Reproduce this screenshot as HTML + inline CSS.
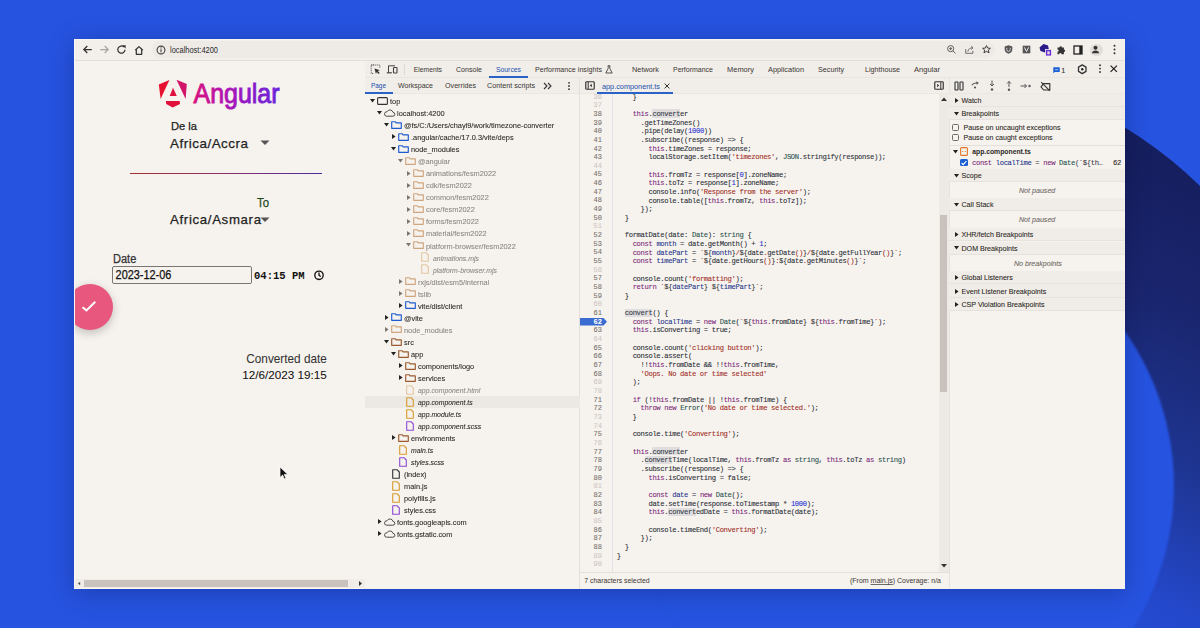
<!DOCTYPE html>
<html><head><meta charset="utf-8">
<style>
*{margin:0;padding:0;box-sizing:border-box}
html,body{width:1200px;height:628px;overflow:hidden}
body{position:relative;background:#2653e0;font-family:"Liberation Sans", sans-serif;}
.a{position:absolute}
.t{position:absolute;white-space:pre;line-height:1;-webkit-text-stroke:0.08px currentColor}
.m{font-family:"Liberation Mono", monospace}
svg{position:absolute;overflow:visible}
</style></head><body>

<div class="a" style="left:486px;top:65.6px;width:840px;height:840px;border-radius:50%;background:linear-gradient(205deg,#141c58 0%,#161f60 15%,#1a2670 26%,#1e3592 38%,#2448cc 50%,#2653e0 60%)"></div>
<div class="a" style="left:638px;top:217.6px;width:536px;height:536px;border-radius:50%;background:#2653e0;filter:blur(1.2px)"></div>

<div class="a" style="left:74px;top:39px;width:1051px;height:550px;background:#f6f2ed;box-shadow:0 4px 24px rgba(0,0,40,0.25)"></div>
<div class="a" style="left:0;top:0;width:1200px;height:628px;clip-path:inset(39px 75px 39px 74px)">
<div class="a" style="left:74px;top:39px;width:1051px;height:22px;background:#f3efeb;border-bottom:1px solid #e2ded9"></div>
<div class="a" style="left:152px;top:41px;width:843px;height:17px;border-radius:9px;background:#eeeae6"></div>
<svg style="left:81.5px;top:44px" width="11" height="11" viewBox="0 0 11 11"><path d="M9.8 5.5H1.8M5.3 2L1.8 5.5 5.3 9" fill="none" stroke="#333" stroke-width="1.25"/></svg>
<svg style="left:98.5px;top:44px" width="11" height="11" viewBox="0 0 11 11"><path d="M1.2 5.5H9.2M5.7 2L9.2 5.5 5.7 9" fill="none" stroke="#a9a5a0" stroke-width="1.25"/></svg>
<svg style="left:116px;top:44px" width="11" height="11" viewBox="0 0 11 11"><path d="M9 5.7A3.6 3.6 0 1 1 7.9 3" fill="none" stroke="#333" stroke-width="1.25"/><path d="M6.3 1.3h3.3v3.3z" fill="#333"/></svg>
<svg style="left:133px;top:43.5px" width="12" height="12" viewBox="0 0 12 12"><path d="M2.2 6.2L6 2.6l3.8 3.6M3.3 5.3v5h5.4v-5" fill="none" stroke="#333" stroke-width="1.25" stroke-linejoin="round"/></svg>
<svg style="left:156px;top:44.5px" width="10" height="10" viewBox="0 0 10 10"><circle cx="5" cy="5" r="3.9" fill="none" stroke="#444" stroke-width="1.1"/><path d="M5 4.3v3" stroke="#444" stroke-width="1.1"/><circle cx="5" cy="2.9" r="0.6" fill="#444"/></svg>

<svg style="left:0;top:0" width="1" height="1"><text x="170" y="52.6" font-family="Liberation Sans" font-size="8.6" fill="#2a2a2a" textLength="48" lengthAdjust="spacingAndGlyphs">localhost:4200</text></svg>
<svg style="left:946px;top:44px" width="11" height="11" viewBox="0 0 13 13"><circle cx="5.5" cy="5.5" r="3.6" fill="none" stroke="#555" stroke-width="1.1"/><path d="M8.2 8.2l3 3M3.8 5.5h3.4M5.5 3.8v3.4" stroke="#555" stroke-width="1.1"/></svg>
<svg style="left:964px;top:44px" width="11" height="11" viewBox="0 0 13 13"><path d="M2 6v5h8.5V8" fill="none" stroke="#666" stroke-width="1.1"/><path d="M4.5 9c0.5-3 2.5-4.5 6-4.5M8.5 2.5l2.2 2-2.2 2" fill="none" stroke="#666" stroke-width="1.1"/></svg>
<svg style="left:981px;top:44px" width="11" height="11" viewBox="0 0 13 13"><path d="M6.5 1.8l1.4 3 3.2.3-2.4 2.1.8 3.2-3-1.7-3 1.7.8-3.2-2.4-2.1 3.2-.3z" fill="none" stroke="#333" stroke-width="1.1" stroke-linejoin="round"/></svg>
<svg style="left:1003px;top:44px" width="11" height="11" viewBox="0 0 13 13"><path d="M6.5 1.5l4.5 1.5v3.5c0 2.5-2 4.2-4.5 5-2.5-.8-4.5-2.5-4.5-5V3z" fill="#555"/><path d="M4.5 4.5v2.2a2 2 0 0 0 4 0V4.5" fill="none" stroke="#eee" stroke-width="0.9"/></svg>
<svg style="left:1021px;top:44px" width="11" height="11" viewBox="0 0 13 13"><rect x="2" y="2" width="9" height="9" fill="#555"/><path d="M4 4l2.5 5 2.5-5" fill="none" stroke="#eee" stroke-width="1.1"/></svg>
<svg style="left:1038px;top:42px" width="15" height="15" viewBox="0 0 15 15"><path d="M1.5 5.5l4-3.5 4.5 1.5 1 4.5-4 2.5-4.5-1.5z" fill="#2a1a8a"/><rect x="7.5" y="7.5" width="6" height="6.5" fill="#6b2bd8" stroke="#f2eeea" stroke-width="0.8"/><rect x="9.3" y="9.3" width="2.4" height="3" fill="#ddd"/></svg>
<svg style="left:1055px;top:43px" width="13" height="13" viewBox="0 0 13 13"><path d="M2.5 4.5h2a1.2 1.2 0 1 1 2.4 0h2v2a1.2 1.2 0 1 1 0 2.4v2.3H6.6a1.2 1.2 0 1 0-2.4 0H2.5V8.8a1.2 1.2 0 1 0 0-2.4z" fill="#333"/></svg>
<svg style="left:1073px;top:45px" width="10" height="10" viewBox="0 0 10 10"><rect x="1" y="1" width="8" height="8" fill="none" stroke="#222" stroke-width="1.3"/><rect x="6.3" y="1" width="2.7" height="8" fill="#222"/></svg>
<div class="a" style="left:1090px;top:43.5px;width:12.5px;height:12.5px;border-radius:50%;background:#e1ddd8"></div>
<svg style="left:1089px;top:43px" width="13" height="13" viewBox="0 0 13 13"><circle cx="6.5" cy="4.8" r="2" fill="#333"/><path d="M2.8 10.2c0.5-2 2-2.8 3.7-2.8s3.2.8 3.7 2.8z" fill="#333"/></svg>
<svg style="left:1108px;top:43px" width="13" height="13" viewBox="0 0 13 13"><circle cx="6.5" cy="2.8" r="1" fill="#333"/><circle cx="6.5" cy="6.5" r="1" fill="#333"/><circle cx="6.5" cy="10.2" r="1" fill="#333"/></svg>

<svg style="left:155px;top:75px" width="40" height="37" viewBox="0 0 40 37">
<path d="M3.8 9.4L14.4 5 5.6 23.9z" fill="#e5112f"/>
<path d="M21.5 4.7L31.8 9.1 30.6 23.9z" fill="#d2146a"/>
<path d="M18 12.7L14.7 20.9H21.8z" fill="#e0103f"/>
<path d="M10.9 25.9H24.7L25 28.9 17.7 32.4 11.2 28.9z" fill="#e0103a"/>
</svg>
<svg style="left:0;top:0" width="1200" height="628" viewBox="0 0 1200 628">
<defs><linearGradient id="ag" gradientUnits="userSpaceOnUse" x1="193" y1="0" x2="280" y2="0"><stop offset="0" stop-color="#d8107c"/><stop offset="0.35" stop-color="#b414b2"/><stop offset="0.6" stop-color="#9018c6"/><stop offset="1" stop-color="#6a22dc"/></linearGradient></defs>
<text x="193.5" y="102.7" font-family="Liberation Sans" font-size="27.5" textLength="86" lengthAdjust="spacingAndGlyphs" fill="url(#ag)" stroke="url(#ag)" stroke-width="0.9">Angular</text>
</svg>
<svg style="left:0;top:0" width="1" height="1"><text x="171" y="130.2" font-family="Liberation Sans" font-size="11.2" fill="#222" stroke="#222" stroke-width="0.25" textLength="26.00" lengthAdjust="spacingAndGlyphs" >De la</text></svg>
<svg style="left:0;top:0" width="1" height="1"><text x="170" y="148" font-family="Liberation Sans" font-size="13.4" fill="#222" stroke="#222" stroke-width="0.25" textLength="78.00" lengthAdjust="spacing" >Africa/Accra</text></svg>
<svg style="left:260px;top:140px" width="10" height="6" viewBox="0 0 10 6"><path d="M0.5 0.5h9L5 5z" fill="#555"/></svg>
<div class="a" style="left:130px;top:173px;width:192px;height:1.3px;background:linear-gradient(90deg,#a33030,#8a2f6a 50%,#4a2ca0)"></div>
<svg style="left:0;top:0" width="1" height="1"><text x="257" y="207" font-family="Liberation Sans" font-size="12.4" fill="#1d4a1d" stroke="#1d4a1d" stroke-width="0.25" textLength="12.00" lengthAdjust="spacingAndGlyphs" >To</text></svg>
<svg style="left:0;top:0" width="1" height="1"><text x="170" y="224.4" font-family="Liberation Sans" font-size="13.2" fill="#222" stroke="#222" stroke-width="0.25" textLength="91.00" lengthAdjust="spacing" >Africa/Asmara</text></svg>
<svg style="left:260px;top:217px" width="10" height="6" viewBox="0 0 10 6"><path d="M0.5 0.5h9L5 5z" fill="#555"/></svg>
<svg style="left:0;top:0" width="1" height="1"><text x="113" y="262.65" font-family="Liberation Sans" font-size="12" fill="#333" stroke="#333" stroke-width="0.25" textLength="23.30" lengthAdjust="spacingAndGlyphs" >Date</text></svg>
<div class="a" style="left:112px;top:266px;width:140px;height:17.5px;border:1px solid #7a7572;border-radius:2px"></div>
<svg style="left:0;top:0" width="1" height="1"><text x="115.6" y="278.9" font-family="Liberation Sans" font-size="12" fill="#111" stroke="#111" stroke-width="0.25" textLength="55.80" lengthAdjust="spacingAndGlyphs" >2023-12-06</text></svg>
<svg style="left:0;top:0" width="1" height="1"><text x="254" y="278.8" font-family="Liberation Mono" font-weight="bold" font-size="10.9" fill="#111" textLength="50.7" lengthAdjust="spacingAndGlyphs">04:15 PM</text></svg>
<svg style="left:313px;top:269px" width="12" height="12" viewBox="0 0 12 12"><circle cx="6" cy="6.3" r="4.2" fill="none" stroke="#111" stroke-width="1.35"/><path d="M6 3.6v2.8l1.8 1.1" fill="none" stroke="#111" stroke-width="1.3"/></svg>
<div class="a" style="left:66.5px;top:283.5px;width:46px;height:46px;border-radius:50%;background:#e8577d;box-shadow:0 3px 10px rgba(0,0,0,0.22)"></div>
<svg style="left:81px;top:299px" width="16" height="14" viewBox="0 0 16 14"><path d="M1.5 8.2l4 3.2 8.8-8.6" fill="none" stroke="#fff" stroke-width="2"/></svg>
<svg style="left:0;top:0" width="1" height="1"><text x="246.3" y="362.75" font-family="Liberation Sans" font-size="12.2" fill="#333" stroke="#333" stroke-width="0.05" textLength="80.50" lengthAdjust="spacingAndGlyphs" >Converted date</text></svg>
<svg style="left:0;top:0" width="1" height="1"><text x="242.3" y="379" font-family="Liberation Sans" font-size="11.8" fill="#111" stroke="#111" stroke-width="0.05" textLength="84.50" lengthAdjust="spacingAndGlyphs" >12/6/2023 19:15</text></svg>
<svg style="left:279px;top:465.5px" width="10" height="14" viewBox="0 0 10 14"><path d="M1 1v10.5l2.6-2.4 1.8 4 1.6-.8-1.8-3.9H8.8z" fill="#111" stroke="#fff" stroke-width="0.7"/></svg>
<div class="a" style="left:74px;top:579px;width:291px;height:9px;background:#f0ece8"></div>
<div class="a" style="left:84px;top:580px;width:264px;height:7px;background:#c9c2bd"></div>
<svg style="left:77.3px;top:581.2px" width="4" height="5" viewBox="0 0 4 5"><path d="M3.2 0.8L0.8 2.5 3.2 4.2z" fill="#555"/></svg>
<svg style="left:357px;top:580px" width="7" height="7" viewBox="0 0 7 7"><path d="M2 1l3 2.5L2 6z" fill="#333"/></svg>
<div class="a" style="left:364.6px;top:61px;width:1.6px;height:528px;background:#e7e3ec"></div>
<div class="a" style="left:365px;top:61px;width:760px;height:527px;background:#f6f2ee"></div>
<div class="a" style="left:365px;top:61px;width:760px;height:17px;background:#f1ede9;border-bottom:1px solid #e9e5e1"></div>
<svg style="left:370px;top:64px" width="11" height="11" viewBox="0 0 11 11"><path d="M4 1H1.2v8.5H4" fill="none" stroke="#555" stroke-width="0.9" stroke-dasharray="1.2 0.8"/><path d="M1.2 1h8.6v3" fill="none" stroke="#555" stroke-width="0.9" stroke-dasharray="1.2 0.8"/><path d="M4.5 4.5l5.5 1.8-2.3.7 2 2-1 1-2-2-.7 2.3z" fill="#333"/></svg>
<svg style="left:386px;top:64px" width="12" height="11" viewBox="0 0 12 11"><path d="M2.5 8.5V1.8h6.5" fill="none" stroke="#444" stroke-width="1"/><path d="M0.8 8.8h5" stroke="#444" stroke-width="1.2"/><rect x="7.5" y="3.5" width="3.5" height="5.5" rx="0.6" fill="none" stroke="#444" stroke-width="1.1"/></svg>
<div class="a" style="left:403.5px;top:64px;width:1px;height:11px;background:#ddd8d3"></div>
<svg style="left:0;top:0" width="1" height="1"><text x="413.7" y="72.09" font-family="Liberation Sans" font-size="7.2" fill="#3a3632" textLength="28.30000000000001" lengthAdjust="spacingAndGlyphs" >Elements</text></svg>
<svg style="left:0;top:0" width="1" height="1"><text x="456" y="72.09" font-family="Liberation Sans" font-size="7.2" fill="#3a3632" textLength="26" lengthAdjust="spacingAndGlyphs" >Console</text></svg>
<svg style="left:0;top:0" width="1" height="1"><text x="496" y="72.09" font-family="Liberation Sans" font-size="7.2" fill="#1a4fb0" textLength="25" lengthAdjust="spacingAndGlyphs" >Sources</text></svg>
<svg style="left:0;top:0" width="1" height="1"><text x="535" y="72.09" font-family="Liberation Sans" font-size="7.2" fill="#3a3632" textLength="67" lengthAdjust="spacingAndGlyphs" >Performance insights</text></svg>
<svg style="left:0;top:0" width="1" height="1"><text x="632" y="72.09" font-family="Liberation Sans" font-size="7.2" fill="#3a3632" textLength="27" lengthAdjust="spacingAndGlyphs" >Network</text></svg>
<svg style="left:0;top:0" width="1" height="1"><text x="673" y="72.09" font-family="Liberation Sans" font-size="7.2" fill="#3a3632" textLength="40" lengthAdjust="spacingAndGlyphs" >Performance</text></svg>
<svg style="left:0;top:0" width="1" height="1"><text x="727" y="72.09" font-family="Liberation Sans" font-size="7.2" fill="#3a3632" textLength="27" lengthAdjust="spacingAndGlyphs" >Memory</text></svg>
<svg style="left:0;top:0" width="1" height="1"><text x="768" y="72.09" font-family="Liberation Sans" font-size="7.2" fill="#3a3632" textLength="36" lengthAdjust="spacingAndGlyphs" >Application</text></svg>
<svg style="left:0;top:0" width="1" height="1"><text x="818" y="72.09" font-family="Liberation Sans" font-size="7.2" fill="#3a3632" textLength="26" lengthAdjust="spacingAndGlyphs" >Security</text></svg>
<svg style="left:0;top:0" width="1" height="1"><text x="865" y="72.09" font-family="Liberation Sans" font-size="7.2" fill="#3a3632" textLength="35" lengthAdjust="spacingAndGlyphs" >Lighthouse</text></svg>
<svg style="left:0;top:0" width="1" height="1"><text x="914" y="72.09" font-family="Liberation Sans" font-size="7.2" fill="#3a3632" textLength="26" lengthAdjust="spacingAndGlyphs" >Angular</text></svg>
<div class="a" style="left:489px;top:76px;width:39px;height:1.6px;background:#2b62c8"></div>
<svg style="left:605px;top:65px" width="8" height="9" viewBox="0 0 8 9"><path d="M2.8 0.8h2.4M3.2 0.8v2.6L0.8 8h6.4L4.8 3.4V0.8" fill="none" stroke="#444" stroke-width="0.9"/></svg>
<svg style="left:1052.5px;top:67px" width="7" height="7" viewBox="0 0 7 7"><path d="M0.3 0.3h6.4v4.6H1.8L0.3 6.3z" fill="#1a5fd6"/><path d="M2 2.8h3" stroke="#cfe0ff" stroke-width="0.8"/></svg>
<div class="t" style="left:1061.3px;top:67.2px;font-size:7.4px;color:#333">1</div>
<svg style="left:1077px;top:63.5px" width="10.5" height="10.5" viewBox="0 0 10.5 10.5"><path d="M5.25 0.9L9 3.1v4.3L5.25 9.6 1.5 7.4V3.1z" fill="none" stroke="#333" stroke-width="1.3" stroke-linejoin="round"/><circle cx="5.25" cy="5.25" r="1.2" fill="#222"/></svg>
<svg style="left:1096.5px;top:64px" width="6" height="9" viewBox="0 0 6 9"><circle cx="3" cy="1.2" r="0.95" fill="#333"/><circle cx="3" cy="4.6" r="0.95" fill="#333"/><circle cx="3" cy="8" r="0.95" fill="#333"/></svg>
<svg style="left:1110px;top:65px" width="7.5" height="7.5" viewBox="0 0 7.5 7.5"><path d="M0.6 0.6l6.3 6.3M6.9 0.6L0.6 6.9" stroke="#222" stroke-width="1.2"/></svg>
<div class="a" style="left:365px;top:78px;width:760px;height:16px;background:#f1ede9;border-bottom:1px solid #ebe7e3"></div>
<svg style="left:0;top:0" width="1" height="1"><text x="371" y="88.19" font-family="Liberation Sans" font-size="7.2" fill="#1a4fb0" textLength="15" lengthAdjust="spacingAndGlyphs" >Page</text></svg>
<svg style="left:0;top:0" width="1" height="1"><text x="398" y="88.19" font-family="Liberation Sans" font-size="7.2" fill="#3a3632" textLength="35" lengthAdjust="spacingAndGlyphs" >Workspace</text></svg>
<svg style="left:0;top:0" width="1" height="1"><text x="445" y="88.19" font-family="Liberation Sans" font-size="7.2" fill="#3a3632" textLength="31" lengthAdjust="spacingAndGlyphs" >Overrides</text></svg>
<svg style="left:0;top:0" width="1" height="1"><text x="487" y="88.19" font-family="Liberation Sans" font-size="7.2" fill="#3a3632" textLength="48" lengthAdjust="spacingAndGlyphs" >Content scripts</text></svg>
<div class="a" style="left:365px;top:92.3px;width:28px;height:1.6px;background:#2b62c8"></div>
<svg style="left:543px;top:82px" width="9" height="8" viewBox="0 0 9 8"><path d="M1 1l3 3-3 3M5 1l3 3-3 3" fill="none" stroke="#333" stroke-width="1.1"/></svg>
<svg style="left:566px;top:81px" width="6" height="10" viewBox="0 0 6 10"><circle cx="3" cy="1.8" r="0.9" fill="#333"/><circle cx="3" cy="5" r="0.9" fill="#333"/><circle cx="3" cy="8.2" r="0.9" fill="#333"/></svg>
<div class="a" style="left:579.2px;top:78px;width:1px;height:511px;background:#e3dfe3"></div>
<svg style="left:585px;top:81px" width="10" height="9" viewBox="0 0 11 10"><rect x="0.8" y="0.8" width="9.4" height="8.4" rx="1" fill="none" stroke="#333" stroke-width="1.3"/><path d="M3.5 1v8" stroke="#333" stroke-width="1.1"/><path d="M7.5 3v4L5.3 5z" fill="#333"/></svg>
<svg style="left:0;top:0" width="1" height="1"><text x="602" y="89.09" font-family="Liberation Sans" font-size="7.2" fill="#1a4fb0" textLength="58" lengthAdjust="spacingAndGlyphs" >app.component.ts</text></svg>
<svg style="left:664px;top:83px" width="6" height="6" viewBox="0 0 6 6"><path d="M0.6 0.6l4.8 4.8M5.4 0.6L0.6 5.4" stroke="#333" stroke-width="1"/></svg>
<div class="a" style="left:597px;top:92.3px;width:76px;height:1.6px;background:#2b62c8"></div>
<svg style="left:934px;top:81px" width="10" height="9" viewBox="0 0 11 10"><rect x="0.8" y="0.8" width="9.4" height="8.4" rx="1" fill="none" stroke="#333" stroke-width="1.3"/><path d="M7.5 1v8" stroke="#333" stroke-width="1.1"/><path d="M3.5 3v4L5.7 5z" fill="#333"/></svg>
<div class="a" style="left:948.5px;top:78px;width:1px;height:510px;background:#e6e2dd"></div>
<svg style="left:954px;top:81px" width="10" height="10" viewBox="0 0 10 10"><rect x="1" y="1" width="3" height="8" rx="0.6" fill="none" stroke="#333" stroke-width="1.1"/><rect x="6" y="1" width="3" height="8" rx="0.6" fill="none" stroke="#333" stroke-width="1.1"/></svg>
<svg style="left:970px;top:80px" width="11" height="10" viewBox="0 0 11 10"><path d="M1.8 5.2c1-1.8 2.6-2.5 5.2-2.2" fill="none" stroke="#555" stroke-width="1.1"/><path d="M6.3 1.2l2.6 1.7-2.3 1.8z" fill="#555"/><circle cx="5" cy="7.5" r="1.1" fill="#555"/></svg>
<svg style="left:988px;top:80px" width="8" height="12" viewBox="0 0 8 12"><path d="M4 0.5v5" stroke="#555" stroke-width="1"/><path d="M2 4l2 2 2-2" fill="none" stroke="#555" stroke-width="1"/><circle cx="4" cy="9.5" r="1.2" fill="#555"/></svg>
<svg style="left:1005px;top:80px" width="8" height="12" viewBox="0 0 8 12"><path d="M4 1.5v5.5" stroke="#555" stroke-width="1"/><path d="M2 3.5l2-2 2 2" fill="none" stroke="#555" stroke-width="1"/><circle cx="4" cy="9.8" r="1.2" fill="#555"/></svg>
<svg style="left:1020px;top:81px" width="12" height="10" viewBox="0 0 12 10"><path d="M0.5 5h6" stroke="#555" stroke-width="1"/><path d="M4.5 3l2 2-2 2" fill="none" stroke="#555" stroke-width="1"/><circle cx="9.5" cy="5" r="1.2" fill="#555"/></svg>
<svg style="left:1040px;top:80.5px" width="11" height="11" viewBox="0 0 11 11"><path d="M1 5.8L3.6 2.6H9.8V9H3.6z" fill="none" stroke="#333" stroke-width="1.15" stroke-linejoin="round"/><path d="M1.2 1.2l8.6 8.6" stroke="#333" stroke-width="1.15"/></svg>
<div class="a" style="left:365px;top:395.65px;width:214.5px;height:12px;background:#ece8e3"></div>
<svg style="left:370.00px;top:98.90px" width="5" height="4" viewBox="0 0 5 4"><path d="M0 0h5L2.5 3.6z" fill="#222"/></svg>
<svg style="left:377.00px;top:96.90px" width="11" height="8" viewBox="0 0 11 8"><rect x="0.6" y="0.6" width="9.8" height="6.8" rx="1" fill="none" stroke="#333" stroke-width="1.1"/></svg>
<div class="t" style="left:390.00px;top:98.15px;font-size:7.7px;transform:scaleX(0.96);transform-origin:0 0;color:#2b2723;">top</div>
<svg style="left:377.10px;top:110.93px" width="5" height="4" viewBox="0 0 5 4"><path d="M0 0h5L2.5 3.6z" fill="#222"/></svg>
<svg style="left:384.10px;top:108.93px" width="11" height="8" viewBox="0 0 11 8"><path d="M2.5 7.2h6.3a1.9 1.9 0 0 0 .2-3.8A3.2 3.2 0 0 0 3 2.8 2.2 2.2 0 0 0 2.5 7.2z" fill="none" stroke="#444" stroke-width="0.95"/></svg>
<div class="t" style="left:397.10px;top:110.18px;font-size:7.7px;transform:scaleX(0.96);transform-origin:0 0;color:#2b2723;">localhost:4200</div>
<svg style="left:384.20px;top:122.96px" width="5" height="4" viewBox="0 0 5 4"><path d="M0 0h5L2.5 3.6z" fill="#222"/></svg>
<svg style="left:391.20px;top:120.96px" width="11" height="8" viewBox="0 0 11 8"><path d="M0.7 0.7h3.4l1 1.2h5.2v5.4H0.7z" fill="none" stroke="#1f5bd0" stroke-width="1.15" stroke-linejoin="round"/></svg>
<div class="t" style="left:404.20px;top:122.21px;font-size:7.7px;transform:scaleX(0.96);transform-origin:0 0;color:#2b2723;">@fs/C:/Users/chayi9/work/timezone-converter</div>
<svg style="left:392.30px;top:134.49px" width="4" height="5" viewBox="0 0 4 5"><path d="M0 0v5l3.6-2.5z" fill="#222"/></svg>
<svg style="left:398.30px;top:132.99px" width="11" height="8" viewBox="0 0 11 8"><path d="M0.7 0.7h3.4l1 1.2h5.2v5.4H0.7z" fill="none" stroke="#1f5bd0" stroke-width="1.15" stroke-linejoin="round"/></svg>
<div class="t" style="left:411.30px;top:134.24px;font-size:7.7px;transform:scaleX(0.96);transform-origin:0 0;color:#2b2723;">.angular/cache/17.0.3/vite/deps</div>
<svg style="left:391.30px;top:147.02px" width="5" height="4" viewBox="0 0 5 4"><path d="M0 0h5L2.5 3.6z" fill="#222"/></svg>
<svg style="left:398.30px;top:145.02px" width="11" height="8" viewBox="0 0 11 8"><path d="M0.7 0.7h3.4l1 1.2h5.2v5.4H0.7z" fill="none" stroke="#1f5bd0" stroke-width="1.15" stroke-linejoin="round"/></svg>
<div class="t" style="left:411.30px;top:146.27px;font-size:7.7px;transform:scaleX(0.96);transform-origin:0 0;color:#2b2723;">node_modules</div>
<svg style="left:398.40px;top:159.05px" width="5" height="4" viewBox="0 0 5 4"><path d="M0 0h5L2.5 3.6z" fill="#7d7670"/></svg>
<svg style="left:405.40px;top:157.05px" width="11" height="8" viewBox="0 0 11 8"><path d="M0.7 0.7h3.4l1 1.2h5.2v5.4H0.7z" fill="none" stroke="#cfa57f" stroke-width="1.15" stroke-linejoin="round"/></svg>
<div class="t" style="left:418.40px;top:158.30px;font-size:7.7px;transform:scaleX(0.96);transform-origin:0 0;color:#8d8782;">@angular</div>
<svg style="left:406.50px;top:170.58px" width="4" height="5" viewBox="0 0 4 5"><path d="M0 0v5l3.6-2.5z" fill="#7d7670"/></svg>
<svg style="left:412.50px;top:169.08px" width="11" height="8" viewBox="0 0 11 8"><path d="M0.7 0.7h3.4l1 1.2h5.2v5.4H0.7z" fill="none" stroke="#cfa57f" stroke-width="1.15" stroke-linejoin="round"/></svg>
<div class="t" style="left:425.50px;top:170.33px;font-size:7.7px;transform:scaleX(0.96);transform-origin:0 0;color:#8d8782;">animations/fesm2022</div>
<svg style="left:406.50px;top:182.61px" width="4" height="5" viewBox="0 0 4 5"><path d="M0 0v5l3.6-2.5z" fill="#7d7670"/></svg>
<svg style="left:412.50px;top:181.11px" width="11" height="8" viewBox="0 0 11 8"><path d="M0.7 0.7h3.4l1 1.2h5.2v5.4H0.7z" fill="none" stroke="#cfa57f" stroke-width="1.15" stroke-linejoin="round"/></svg>
<div class="t" style="left:425.50px;top:182.36px;font-size:7.7px;transform:scaleX(0.96);transform-origin:0 0;color:#8d8782;">cdk/fesm2022</div>
<svg style="left:406.50px;top:194.64px" width="4" height="5" viewBox="0 0 4 5"><path d="M0 0v5l3.6-2.5z" fill="#7d7670"/></svg>
<svg style="left:412.50px;top:193.14px" width="11" height="8" viewBox="0 0 11 8"><path d="M0.7 0.7h3.4l1 1.2h5.2v5.4H0.7z" fill="none" stroke="#cfa57f" stroke-width="1.15" stroke-linejoin="round"/></svg>
<div class="t" style="left:425.50px;top:194.39px;font-size:7.7px;transform:scaleX(0.96);transform-origin:0 0;color:#8d8782;">common/fesm2022</div>
<svg style="left:406.50px;top:206.67px" width="4" height="5" viewBox="0 0 4 5"><path d="M0 0v5l3.6-2.5z" fill="#7d7670"/></svg>
<svg style="left:412.50px;top:205.17px" width="11" height="8" viewBox="0 0 11 8"><path d="M0.7 0.7h3.4l1 1.2h5.2v5.4H0.7z" fill="none" stroke="#cfa57f" stroke-width="1.15" stroke-linejoin="round"/></svg>
<div class="t" style="left:425.50px;top:206.42px;font-size:7.7px;transform:scaleX(0.96);transform-origin:0 0;color:#8d8782;">core/fesm2022</div>
<svg style="left:406.50px;top:218.70px" width="4" height="5" viewBox="0 0 4 5"><path d="M0 0v5l3.6-2.5z" fill="#7d7670"/></svg>
<svg style="left:412.50px;top:217.20px" width="11" height="8" viewBox="0 0 11 8"><path d="M0.7 0.7h3.4l1 1.2h5.2v5.4H0.7z" fill="none" stroke="#cfa57f" stroke-width="1.15" stroke-linejoin="round"/></svg>
<div class="t" style="left:425.50px;top:218.45px;font-size:7.7px;transform:scaleX(0.96);transform-origin:0 0;color:#8d8782;">forms/fesm2022</div>
<svg style="left:406.50px;top:230.73px" width="4" height="5" viewBox="0 0 4 5"><path d="M0 0v5l3.6-2.5z" fill="#7d7670"/></svg>
<svg style="left:412.50px;top:229.23px" width="11" height="8" viewBox="0 0 11 8"><path d="M0.7 0.7h3.4l1 1.2h5.2v5.4H0.7z" fill="none" stroke="#cfa57f" stroke-width="1.15" stroke-linejoin="round"/></svg>
<div class="t" style="left:425.50px;top:230.48px;font-size:7.7px;transform:scaleX(0.96);transform-origin:0 0;color:#8d8782;">material/fesm2022</div>
<svg style="left:405.50px;top:243.26px" width="5" height="4" viewBox="0 0 5 4"><path d="M0 0h5L2.5 3.6z" fill="#7d7670"/></svg>
<svg style="left:412.50px;top:241.26px" width="11" height="8" viewBox="0 0 11 8"><path d="M0.7 0.7h3.4l1 1.2h5.2v5.4H0.7z" fill="none" stroke="#cfa57f" stroke-width="1.15" stroke-linejoin="round"/></svg>
<div class="t" style="left:425.50px;top:242.51px;font-size:7.7px;transform:scaleX(0.96);transform-origin:0 0;color:#8d8782;">platform-browser/fesm2022</div>
<svg style="left:420.60px;top:252.29px" width="8" height="10" viewBox="0 0 8 10"><path d="M0.7 0.7h4.3l2.3 2.3v6.3H0.7z" fill="none" stroke="#e2c79f" stroke-width="1.1" stroke-linejoin="round"/></svg>
<div class="t" style="left:432.60px;top:254.54px;font-size:7.7px;transform:scaleX(0.895);transform-origin:0 0;color:#8d8782;font-style:italic;">animations.mjs</div>
<svg style="left:420.60px;top:264.32px" width="8" height="10" viewBox="0 0 8 10"><path d="M0.7 0.7h4.3l2.3 2.3v6.3H0.7z" fill="none" stroke="#e2c79f" stroke-width="1.1" stroke-linejoin="round"/></svg>
<div class="t" style="left:432.60px;top:266.57px;font-size:7.7px;transform:scaleX(0.895);transform-origin:0 0;color:#8d8782;font-style:italic;">platform-browser.mjs</div>
<svg style="left:399.40px;top:278.85px" width="4" height="5" viewBox="0 0 4 5"><path d="M0 0v5l3.6-2.5z" fill="#7d7670"/></svg>
<svg style="left:405.40px;top:277.35px" width="11" height="8" viewBox="0 0 11 8"><path d="M0.7 0.7h3.4l1 1.2h5.2v5.4H0.7z" fill="none" stroke="#cfa57f" stroke-width="1.15" stroke-linejoin="round"/></svg>
<div class="t" style="left:418.40px;top:278.60px;font-size:7.7px;transform:scaleX(0.96);transform-origin:0 0;color:#8d8782;">rxjs/dist/esm5/internal</div>
<svg style="left:399.40px;top:290.88px" width="4" height="5" viewBox="0 0 4 5"><path d="M0 0v5l3.6-2.5z" fill="#7d7670"/></svg>
<svg style="left:405.40px;top:289.38px" width="11" height="8" viewBox="0 0 11 8"><path d="M0.7 0.7h3.4l1 1.2h5.2v5.4H0.7z" fill="none" stroke="#cfa57f" stroke-width="1.15" stroke-linejoin="round"/></svg>
<div class="t" style="left:418.40px;top:290.63px;font-size:7.7px;transform:scaleX(0.96);transform-origin:0 0;color:#8d8782;">tslib</div>
<svg style="left:399.40px;top:302.91px" width="4" height="5" viewBox="0 0 4 5"><path d="M0 0v5l3.6-2.5z" fill="#222"/></svg>
<svg style="left:405.40px;top:301.41px" width="11" height="8" viewBox="0 0 11 8"><path d="M0.7 0.7h3.4l1 1.2h5.2v5.4H0.7z" fill="none" stroke="#1f5bd0" stroke-width="1.15" stroke-linejoin="round"/></svg>
<div class="t" style="left:418.40px;top:302.66px;font-size:7.7px;transform:scaleX(0.96);transform-origin:0 0;color:#2b2723;">vite/dist/client</div>
<svg style="left:385.20px;top:314.94px" width="4" height="5" viewBox="0 0 4 5"><path d="M0 0v5l3.6-2.5z" fill="#222"/></svg>
<svg style="left:391.20px;top:313.44px" width="11" height="8" viewBox="0 0 11 8"><path d="M0.7 0.7h3.4l1 1.2h5.2v5.4H0.7z" fill="none" stroke="#1f5bd0" stroke-width="1.15" stroke-linejoin="round"/></svg>
<div class="t" style="left:404.20px;top:314.69px;font-size:7.7px;transform:scaleX(0.96);transform-origin:0 0;color:#2b2723;">@vite</div>
<svg style="left:385.20px;top:326.97px" width="4" height="5" viewBox="0 0 4 5"><path d="M0 0v5l3.6-2.5z" fill="#7d7670"/></svg>
<svg style="left:391.20px;top:325.47px" width="11" height="8" viewBox="0 0 11 8"><path d="M0.7 0.7h3.4l1 1.2h5.2v5.4H0.7z" fill="none" stroke="#cfa57f" stroke-width="1.15" stroke-linejoin="round"/></svg>
<div class="t" style="left:404.20px;top:326.72px;font-size:7.7px;transform:scaleX(0.96);transform-origin:0 0;color:#8d8782;">node_modules</div>
<svg style="left:384.20px;top:339.50px" width="5" height="4" viewBox="0 0 5 4"><path d="M0 0h5L2.5 3.6z" fill="#222"/></svg>
<svg style="left:391.20px;top:337.50px" width="11" height="8" viewBox="0 0 11 8"><path d="M0.7 0.7h3.4l1 1.2h5.2v5.4H0.7z" fill="none" stroke="#9a5b2e" stroke-width="1.15" stroke-linejoin="round"/></svg>
<div class="t" style="left:404.20px;top:338.75px;font-size:7.7px;transform:scaleX(0.96);transform-origin:0 0;color:#2b2723;">src</div>
<svg style="left:391.30px;top:351.53px" width="5" height="4" viewBox="0 0 5 4"><path d="M0 0h5L2.5 3.6z" fill="#222"/></svg>
<svg style="left:398.30px;top:349.53px" width="11" height="8" viewBox="0 0 11 8"><path d="M0.7 0.7h3.4l1 1.2h5.2v5.4H0.7z" fill="none" stroke="#9a5b2e" stroke-width="1.15" stroke-linejoin="round"/></svg>
<div class="t" style="left:411.30px;top:350.78px;font-size:7.7px;transform:scaleX(0.96);transform-origin:0 0;color:#2b2723;">app</div>
<svg style="left:399.40px;top:363.06px" width="4" height="5" viewBox="0 0 4 5"><path d="M0 0v5l3.6-2.5z" fill="#222"/></svg>
<svg style="left:405.40px;top:361.56px" width="11" height="8" viewBox="0 0 11 8"><path d="M0.7 0.7h3.4l1 1.2h5.2v5.4H0.7z" fill="none" stroke="#9a5b2e" stroke-width="1.15" stroke-linejoin="round"/></svg>
<div class="t" style="left:418.40px;top:362.81px;font-size:7.7px;transform:scaleX(0.96);transform-origin:0 0;color:#2b2723;">components/logo</div>
<svg style="left:399.40px;top:375.09px" width="4" height="5" viewBox="0 0 4 5"><path d="M0 0v5l3.6-2.5z" fill="#222"/></svg>
<svg style="left:405.40px;top:373.59px" width="11" height="8" viewBox="0 0 11 8"><path d="M0.7 0.7h3.4l1 1.2h5.2v5.4H0.7z" fill="none" stroke="#9a5b2e" stroke-width="1.15" stroke-linejoin="round"/></svg>
<div class="t" style="left:418.40px;top:374.84px;font-size:7.7px;transform:scaleX(0.96);transform-origin:0 0;color:#2b2723;">services</div>
<svg style="left:406.40px;top:384.62px" width="8" height="10" viewBox="0 0 8 10"><path d="M0.7 0.7h4.3l2.3 2.3v6.3H0.7z" fill="none" stroke="#e2c79f" stroke-width="1.1" stroke-linejoin="round"/></svg>
<div class="t" style="left:418.40px;top:386.87px;font-size:7.7px;transform:scaleX(0.895);transform-origin:0 0;color:#8d8782;font-style:italic;">app.component.html</div>
<svg style="left:406.40px;top:396.65px" width="8" height="10" viewBox="0 0 8 10"><path d="M0.7 0.7h4.3l2.3 2.3v6.3H0.7z" fill="none" stroke="#d59a2c" stroke-width="1.1" stroke-linejoin="round"/></svg>
<div class="t" style="left:418.40px;top:398.90px;font-size:7.7px;transform:scaleX(0.895);transform-origin:0 0;color:#2b2723;font-style:italic;">app.component.ts</div>
<svg style="left:406.40px;top:408.68px" width="8" height="10" viewBox="0 0 8 10"><path d="M0.7 0.7h4.3l2.3 2.3v6.3H0.7z" fill="none" stroke="#d59a2c" stroke-width="1.1" stroke-linejoin="round"/></svg>
<div class="t" style="left:418.40px;top:410.93px;font-size:7.7px;transform:scaleX(0.895);transform-origin:0 0;color:#2b2723;font-style:italic;">app.module.ts</div>
<svg style="left:406.40px;top:420.71px" width="8" height="10" viewBox="0 0 8 10"><path d="M0.7 0.7h4.3l2.3 2.3v6.3H0.7z" fill="none" stroke="#8b4ad2" stroke-width="1.1" stroke-linejoin="round"/></svg>
<div class="t" style="left:418.40px;top:422.96px;font-size:7.7px;transform:scaleX(0.895);transform-origin:0 0;color:#2b2723;font-style:italic;">app.component.scss</div>
<svg style="left:392.30px;top:435.24px" width="4" height="5" viewBox="0 0 4 5"><path d="M0 0v5l3.6-2.5z" fill="#222"/></svg>
<svg style="left:398.30px;top:433.74px" width="11" height="8" viewBox="0 0 11 8"><path d="M0.7 0.7h3.4l1 1.2h5.2v5.4H0.7z" fill="none" stroke="#9a5b2e" stroke-width="1.15" stroke-linejoin="round"/></svg>
<div class="t" style="left:411.30px;top:434.99px;font-size:7.7px;transform:scaleX(0.96);transform-origin:0 0;color:#2b2723;">environments</div>
<svg style="left:399.30px;top:444.77px" width="8" height="10" viewBox="0 0 8 10"><path d="M0.7 0.7h4.3l2.3 2.3v6.3H0.7z" fill="none" stroke="#d59a2c" stroke-width="1.1" stroke-linejoin="round"/></svg>
<div class="t" style="left:411.30px;top:447.02px;font-size:7.7px;transform:scaleX(0.895);transform-origin:0 0;color:#2b2723;font-style:italic;">main.ts</div>
<svg style="left:399.30px;top:456.80px" width="8" height="10" viewBox="0 0 8 10"><path d="M0.7 0.7h4.3l2.3 2.3v6.3H0.7z" fill="none" stroke="#8b4ad2" stroke-width="1.1" stroke-linejoin="round"/></svg>
<div class="t" style="left:411.30px;top:459.05px;font-size:7.7px;transform:scaleX(0.895);transform-origin:0 0;color:#2b2723;font-style:italic;">styles.scss</div>
<svg style="left:392.20px;top:468.83px" width="8" height="10" viewBox="0 0 8 10"><path d="M0.7 0.7h4.3l2.3 2.3v6.3H0.7z" fill="none" stroke="#333" stroke-width="1.1" stroke-linejoin="round"/></svg>
<div class="t" style="left:404.20px;top:471.08px;font-size:7.7px;transform:scaleX(0.96);transform-origin:0 0;color:#2b2723;">(index)</div>
<svg style="left:392.20px;top:480.86px" width="8" height="10" viewBox="0 0 8 10"><path d="M0.7 0.7h4.3l2.3 2.3v6.3H0.7z" fill="none" stroke="#d59a2c" stroke-width="1.1" stroke-linejoin="round"/></svg>
<div class="t" style="left:404.20px;top:483.11px;font-size:7.7px;transform:scaleX(0.96);transform-origin:0 0;color:#2b2723;">main.js</div>
<svg style="left:392.20px;top:492.89px" width="8" height="10" viewBox="0 0 8 10"><path d="M0.7 0.7h4.3l2.3 2.3v6.3H0.7z" fill="none" stroke="#d59a2c" stroke-width="1.1" stroke-linejoin="round"/></svg>
<div class="t" style="left:404.20px;top:495.14px;font-size:7.7px;transform:scaleX(0.96);transform-origin:0 0;color:#2b2723;">polyfills.js</div>
<svg style="left:392.20px;top:504.92px" width="8" height="10" viewBox="0 0 8 10"><path d="M0.7 0.7h4.3l2.3 2.3v6.3H0.7z" fill="none" stroke="#8b4ad2" stroke-width="1.1" stroke-linejoin="round"/></svg>
<div class="t" style="left:404.20px;top:507.17px;font-size:7.7px;transform:scaleX(0.96);transform-origin:0 0;color:#2b2723;">styles.css</div>
<svg style="left:378.10px;top:519.45px" width="4" height="5" viewBox="0 0 4 5"><path d="M0 0v5l3.6-2.5z" fill="#222"/></svg>
<svg style="left:384.10px;top:517.95px" width="11" height="8" viewBox="0 0 11 8"><path d="M2.5 7.2h6.3a1.9 1.9 0 0 0 .2-3.8A3.2 3.2 0 0 0 3 2.8 2.2 2.2 0 0 0 2.5 7.2z" fill="none" stroke="#444" stroke-width="0.95"/></svg>
<div class="t" style="left:397.10px;top:519.20px;font-size:7.7px;transform:scaleX(0.96);transform-origin:0 0;color:#2b2723;">fonts.googleapis.com</div>
<svg style="left:378.10px;top:531.48px" width="4" height="5" viewBox="0 0 4 5"><path d="M0 0v5l3.6-2.5z" fill="#222"/></svg>
<svg style="left:384.10px;top:529.98px" width="11" height="8" viewBox="0 0 11 8"><path d="M2.5 7.2h6.3a1.9 1.9 0 0 0 .2-3.8A3.2 3.2 0 0 0 3 2.8 2.2 2.2 0 0 0 2.5 7.2z" fill="none" stroke="#444" stroke-width="0.95"/></svg>
<div class="t" style="left:397.10px;top:531.23px;font-size:7.7px;transform:scaleX(0.96);transform-origin:0 0;color:#2b2723;">fonts.gstatic.com</div>
<div class="a" style="left:580px;top:94px;width:359px;height:478px;overflow:hidden">
<div class="t m" style="left:0;width:22px;text-align:right;top:-0.46px;font-size:7px;color:#cdc8c3">36</div>
<div class="t m" style="left:36.799999999999955px;top:-0.36px;font-size:7.2px;letter-spacing:-0.36px;color:#262c34">    }</div>
<div class="t m" style="left:0;width:22px;text-align:right;top:8.20px;font-size:7px;color:#cdc8c3">37</div>
<div class="t m" style="left:0;width:22px;text-align:right;top:16.86px;font-size:7px;color:#77716c">38</div>
<div class="t m" style="left:36.799999999999955px;top:16.96px;font-size:7.2px;letter-spacing:-0.36px;color:#262c34">    <span style="color:#7a1f78">this</span>.<span style="color:#262c34">converter</span></div>
<div class="t m" style="left:0;width:22px;text-align:right;top:25.52px;font-size:7px;color:#77716c">39</div>
<div class="t m" style="left:36.799999999999955px;top:25.62px;font-size:7.2px;letter-spacing:-0.36px;color:#262c34">      .<span style="color:#262c34">getTimeZones</span>()</div>
<div class="t m" style="left:0;width:22px;text-align:right;top:34.18px;font-size:7px;color:#77716c">40</div>
<div class="t m" style="left:36.799999999999955px;top:34.28px;font-size:7.2px;letter-spacing:-0.36px;color:#262c34">      .<span style="color:#262c34">pipe</span>(<span style="color:#262c34">delay</span>(<span style="color:#1c2fcf">1000</span>))</div>
<div class="t m" style="left:0;width:22px;text-align:right;top:42.84px;font-size:7px;color:#77716c">41</div>
<div class="t m" style="left:36.799999999999955px;top:42.94px;font-size:7.2px;letter-spacing:-0.36px;color:#262c34">      .<span style="color:#262c34">subscribe</span>((<span style="color:#262c34">response</span>) =&gt; {</div>
<div class="t m" style="left:0;width:22px;text-align:right;top:51.50px;font-size:7px;color:#77716c">42</div>
<div class="t m" style="left:36.799999999999955px;top:51.60px;font-size:7.2px;letter-spacing:-0.36px;color:#262c34">        <span style="color:#7a1f78">this</span>.<span style="color:#262c34">timeZones</span> = <span style="color:#262c34">response</span>;</div>
<div class="t m" style="left:0;width:22px;text-align:right;top:60.16px;font-size:7px;color:#77716c">43</div>
<div class="t m" style="left:36.799999999999955px;top:60.26px;font-size:7.2px;letter-spacing:-0.36px;color:#262c34">        <span style="color:#262c34">localStorage</span>.<span style="color:#262c34">setItem</span>(<span style="color:#9e2c1c">&#x27;timezones&#x27;</span>, <span style="color:#24504a">JSON</span>.<span style="color:#262c34">stringify</span>(<span style="color:#262c34">response</span>));</div>
<div class="t m" style="left:0;width:22px;text-align:right;top:68.82px;font-size:7px;color:#cdc8c3">44</div>
<div class="t m" style="left:0;width:22px;text-align:right;top:77.48px;font-size:7px;color:#77716c">45</div>
<div class="t m" style="left:36.799999999999955px;top:77.58px;font-size:7.2px;letter-spacing:-0.36px;color:#262c34">        <span style="color:#7a1f78">this</span>.<span style="color:#262c34">fromTz</span> = <span style="color:#262c34">response</span>[<span style="color:#1c2fcf">0</span>].<span style="color:#262c34">zoneName</span>;</div>
<div class="t m" style="left:0;width:22px;text-align:right;top:86.14px;font-size:7px;color:#77716c">46</div>
<div class="t m" style="left:36.799999999999955px;top:86.24px;font-size:7.2px;letter-spacing:-0.36px;color:#262c34">        <span style="color:#7a1f78">this</span>.<span style="color:#262c34">toTz</span> = <span style="color:#262c34">response</span>[<span style="color:#1c2fcf">1</span>].<span style="color:#262c34">zoneName</span>;</div>
<div class="t m" style="left:0;width:22px;text-align:right;top:94.80px;font-size:7px;color:#77716c">47</div>
<div class="t m" style="left:36.799999999999955px;top:94.90px;font-size:7.2px;letter-spacing:-0.36px;color:#262c34">        <span style="color:#262c34">console</span>.<span style="color:#262c34">info</span>(<span style="color:#9e2c1c">&#x27;Response from the server&#x27;</span>);</div>
<div class="t m" style="left:0;width:22px;text-align:right;top:103.46px;font-size:7px;color:#77716c">48</div>
<div class="t m" style="left:36.799999999999955px;top:103.56px;font-size:7.2px;letter-spacing:-0.36px;color:#262c34">        <span style="color:#262c34">console</span>.<span style="color:#262c34">table</span>([<span style="color:#7a1f78">this</span>.<span style="color:#262c34">fromTz</span>, <span style="color:#7a1f78">this</span>.<span style="color:#262c34">toTz</span>]);</div>
<div class="t m" style="left:0;width:22px;text-align:right;top:112.12px;font-size:7px;color:#77716c">49</div>
<div class="t m" style="left:36.799999999999955px;top:112.22px;font-size:7.2px;letter-spacing:-0.36px;color:#262c34">      });</div>
<div class="t m" style="left:0;width:22px;text-align:right;top:120.78px;font-size:7px;color:#77716c">50</div>
<div class="t m" style="left:36.799999999999955px;top:120.88px;font-size:7.2px;letter-spacing:-0.36px;color:#262c34">  }</div>
<div class="t m" style="left:0;width:22px;text-align:right;top:129.44px;font-size:7px;color:#cdc8c3">51</div>
<div class="t m" style="left:0;width:22px;text-align:right;top:138.10px;font-size:7px;color:#77716c">52</div>
<div class="t m" style="left:36.799999999999955px;top:138.20px;font-size:7.2px;letter-spacing:-0.36px;color:#262c34">  <span style="color:#262c34">formatDate</span>(<span style="color:#262c34">date</span>: <span style="color:#24504a">Date</span>): <span style="color:#24504a">string</span> {</div>
<div class="t m" style="left:0;width:22px;text-align:right;top:146.76px;font-size:7px;color:#77716c">53</div>
<div class="t m" style="left:36.799999999999955px;top:146.86px;font-size:7.2px;letter-spacing:-0.36px;color:#262c34">    <span style="color:#7a1f78">const</span> <span style="color:#24348a">month</span> = <span style="color:#262c34">date</span>.<span style="color:#262c34">getMonth</span>() + <span style="color:#1c2fcf">1</span>;</div>
<div class="t m" style="left:0;width:22px;text-align:right;top:155.42px;font-size:7px;color:#77716c">54</div>
<div class="t m" style="left:36.799999999999955px;top:155.52px;font-size:7.2px;letter-spacing:-0.36px;color:#262c34">    <span style="color:#7a1f78">const</span> <span style="color:#24348a">datePart</span> = <span style="color:#9e2c1c">`</span><span style="color:#3b3b3b">${</span><span style="color:#24348a">month</span><span style="color:#3b3b3b">}</span><span style="color:#9e2c1c">/</span><span style="color:#3b3b3b">${</span><span style="color:#262c34">date</span><span style="color:#9e2c1c">.</span><span style="color:#262c34">getDate</span><span style="color:#9e2c1c">(</span><span style="color:#9e2c1c">)</span><span style="color:#3b3b3b">}</span><span style="color:#9e2c1c">/</span><span style="color:#3b3b3b">${</span><span style="color:#262c34">date</span><span style="color:#9e2c1c">.</span><span style="color:#262c34">getFullYear</span><span style="color:#9e2c1c">(</span><span style="color:#9e2c1c">)</span><span style="color:#3b3b3b">}</span><span style="color:#9e2c1c">`</span>;</div>
<div class="t m" style="left:0;width:22px;text-align:right;top:164.08px;font-size:7px;color:#77716c">55</div>
<div class="t m" style="left:36.799999999999955px;top:164.18px;font-size:7.2px;letter-spacing:-0.36px;color:#262c34">    <span style="color:#7a1f78">const</span> <span style="color:#24348a">timePart</span> = <span style="color:#9e2c1c">`</span><span style="color:#3b3b3b">${</span><span style="color:#262c34">date</span><span style="color:#9e2c1c">.</span><span style="color:#262c34">getHours</span><span style="color:#9e2c1c">(</span><span style="color:#9e2c1c">)</span><span style="color:#3b3b3b">}</span><span style="color:#9e2c1c">:</span><span style="color:#3b3b3b">${</span><span style="color:#262c34">date</span><span style="color:#9e2c1c">.</span><span style="color:#262c34">getMinutes</span><span style="color:#9e2c1c">(</span><span style="color:#9e2c1c">)</span><span style="color:#3b3b3b">}</span><span style="color:#9e2c1c">`</span>;</div>
<div class="t m" style="left:0;width:22px;text-align:right;top:172.74px;font-size:7px;color:#cdc8c3">56</div>
<div class="t m" style="left:0;width:22px;text-align:right;top:181.40px;font-size:7px;color:#77716c">57</div>
<div class="t m" style="left:36.799999999999955px;top:181.50px;font-size:7.2px;letter-spacing:-0.36px;color:#262c34">    <span style="color:#262c34">console</span>.<span style="color:#262c34">count</span>(<span style="color:#9e2c1c">&#x27;formatting&#x27;</span>);</div>
<div class="t m" style="left:0;width:22px;text-align:right;top:190.06px;font-size:7px;color:#77716c">58</div>
<div class="t m" style="left:36.799999999999955px;top:190.16px;font-size:7.2px;letter-spacing:-0.36px;color:#262c34">    <span style="color:#7a1f78">return</span> <span style="color:#9e2c1c">`</span><span style="color:#3b3b3b">${</span><span style="color:#24348a">datePart</span><span style="color:#3b3b3b">}</span><span style="color:#9e2c1c"> </span><span style="color:#3b3b3b">${</span><span style="color:#24348a">timePart</span><span style="color:#3b3b3b">}</span><span style="color:#9e2c1c">`</span>;</div>
<div class="t m" style="left:0;width:22px;text-align:right;top:198.72px;font-size:7px;color:#77716c">59</div>
<div class="t m" style="left:36.799999999999955px;top:198.82px;font-size:7.2px;letter-spacing:-0.36px;color:#262c34">  }</div>
<div class="t m" style="left:0;width:22px;text-align:right;top:207.38px;font-size:7px;color:#cdc8c3">60</div>
<div class="t m" style="left:0;width:22px;text-align:right;top:216.04px;font-size:7px;color:#77716c">61</div>
<div class="t m" style="left:36.799999999999955px;top:216.14px;font-size:7.2px;letter-spacing:-0.36px;color:#262c34">  <span style="color:#262c34">convert</span>() {</div>
<svg style="left:0px;top:223.60px" width="28" height="8" viewBox="0 0 28 8"><path d="M0 0H23.5L27 3.8 23.5 7.6H0z" fill="#3a6bd0"/></svg>
<div class="t m" style="left:0;width:22px;text-align:right;top:224.70px;font-size:7px;color:#fff;font-weight:bold">62</div>
<div class="t m" style="left:36.799999999999955px;top:224.80px;font-size:7.2px;letter-spacing:-0.36px;color:#262c34">    <span style="color:#7a1f78">const</span> <span style="color:#24348a">localTime</span> = <span style="color:#7a1f78">new</span> <span style="color:#24504a">Date</span>(<span style="color:#9e2c1c">`</span><span style="color:#3b3b3b">${</span><span style="color:#7a1f78">this</span><span style="color:#9e2c1c">.</span><span style="color:#262c34">fromDate</span><span style="color:#3b3b3b">}</span><span style="color:#9e2c1c"> </span><span style="color:#3b3b3b">${</span><span style="color:#7a1f78">this</span><span style="color:#9e2c1c">.</span><span style="color:#262c34">fromTime</span><span style="color:#3b3b3b">}</span><span style="color:#9e2c1c">`</span>);</div>
<div class="t m" style="left:0;width:22px;text-align:right;top:233.36px;font-size:7px;color:#77716c">63</div>
<div class="t m" style="left:36.799999999999955px;top:233.46px;font-size:7.2px;letter-spacing:-0.36px;color:#262c34">    <span style="color:#7a1f78">this</span>.<span style="color:#262c34">isConverting</span> = <span style="color:#262c34">true</span>;</div>
<div class="t m" style="left:0;width:22px;text-align:right;top:242.02px;font-size:7px;color:#cdc8c3">64</div>
<div class="t m" style="left:0;width:22px;text-align:right;top:250.68px;font-size:7px;color:#77716c">65</div>
<div class="t m" style="left:36.799999999999955px;top:250.78px;font-size:7.2px;letter-spacing:-0.36px;color:#262c34">    <span style="color:#262c34">console</span>.<span style="color:#262c34">count</span>(<span style="color:#9e2c1c">&#x27;clicking button&#x27;</span>);</div>
<div class="t m" style="left:0;width:22px;text-align:right;top:259.34px;font-size:7px;color:#77716c">66</div>
<div class="t m" style="left:36.799999999999955px;top:259.44px;font-size:7.2px;letter-spacing:-0.36px;color:#262c34">    <span style="color:#262c34">console</span>.<span style="color:#262c34">assert</span>(</div>
<div class="t m" style="left:0;width:22px;text-align:right;top:268.00px;font-size:7px;color:#77716c">67</div>
<div class="t m" style="left:36.799999999999955px;top:268.10px;font-size:7.2px;letter-spacing:-0.36px;color:#262c34">      !!<span style="color:#7a1f78">this</span>.<span style="color:#262c34">fromDate</span> &amp;&amp; !!<span style="color:#7a1f78">this</span>.<span style="color:#262c34">fromTime</span>,</div>
<div class="t m" style="left:0;width:22px;text-align:right;top:276.66px;font-size:7px;color:#77716c">68</div>
<div class="t m" style="left:36.799999999999955px;top:276.76px;font-size:7.2px;letter-spacing:-0.36px;color:#262c34">      <span style="color:#9e2c1c">&#x27;Oops. No date or time selected&#x27;</span></div>
<div class="t m" style="left:0;width:22px;text-align:right;top:285.32px;font-size:7px;color:#cdc8c3">69</div>
<div class="t m" style="left:36.799999999999955px;top:285.42px;font-size:7.2px;letter-spacing:-0.36px;color:#262c34">    );</div>
<div class="t m" style="left:0;width:22px;text-align:right;top:293.98px;font-size:7px;color:#cdc8c3">70</div>
<div class="t m" style="left:0;width:22px;text-align:right;top:302.64px;font-size:7px;color:#77716c">71</div>
<div class="t m" style="left:36.799999999999955px;top:302.74px;font-size:7.2px;letter-spacing:-0.36px;color:#262c34">    <span style="color:#7a1f78">if</span> (!<span style="color:#7a1f78">this</span>.<span style="color:#262c34">fromDate</span> || !<span style="color:#7a1f78">this</span>.<span style="color:#262c34">fromTime</span>) {</div>
<div class="t m" style="left:0;width:22px;text-align:right;top:311.30px;font-size:7px;color:#77716c">72</div>
<div class="t m" style="left:36.799999999999955px;top:311.40px;font-size:7.2px;letter-spacing:-0.36px;color:#262c34">      <span style="color:#7a1f78">throw</span> <span style="color:#7a1f78">new</span> <span style="color:#24504a">Error</span>(<span style="color:#9e2c1c">&#x27;No date or time selected.&#x27;</span>);</div>
<div class="t m" style="left:0;width:22px;text-align:right;top:319.96px;font-size:7px;color:#cdc8c3">73</div>
<div class="t m" style="left:36.799999999999955px;top:320.06px;font-size:7.2px;letter-spacing:-0.36px;color:#262c34">    }</div>
<div class="t m" style="left:0;width:22px;text-align:right;top:328.62px;font-size:7px;color:#cdc8c3">74</div>
<div class="t m" style="left:0;width:22px;text-align:right;top:337.28px;font-size:7px;color:#77716c">75</div>
<div class="t m" style="left:36.799999999999955px;top:337.38px;font-size:7.2px;letter-spacing:-0.36px;color:#262c34">    <span style="color:#262c34">console</span>.<span style="color:#262c34">time</span>(<span style="color:#9e2c1c">&#x27;Converting&#x27;</span>);</div>
<div class="t m" style="left:0;width:22px;text-align:right;top:345.94px;font-size:7px;color:#cdc8c3">76</div>
<div class="t m" style="left:0;width:22px;text-align:right;top:354.60px;font-size:7px;color:#77716c">77</div>
<div class="t m" style="left:36.799999999999955px;top:354.70px;font-size:7.2px;letter-spacing:-0.36px;color:#262c34">    <span style="color:#7a1f78">this</span>.<span style="color:#262c34">converter</span></div>
<div class="t m" style="left:0;width:22px;text-align:right;top:363.26px;font-size:7px;color:#77716c">78</div>
<div class="t m" style="left:36.799999999999955px;top:363.36px;font-size:7.2px;letter-spacing:-0.36px;color:#262c34">      .<span style="color:#262c34">convertTime</span>(<span style="color:#262c34">localTime</span>, <span style="color:#7a1f78">this</span>.<span style="color:#262c34">fromTz</span> <span style="color:#7a1f78">as</span> <span style="color:#24504a">string</span>, <span style="color:#7a1f78">this</span>.<span style="color:#262c34">toTz</span> <span style="color:#7a1f78">as</span> <span style="color:#24504a">string</span>)</div>
<div class="t m" style="left:0;width:22px;text-align:right;top:371.92px;font-size:7px;color:#77716c">79</div>
<div class="t m" style="left:36.799999999999955px;top:372.02px;font-size:7.2px;letter-spacing:-0.36px;color:#262c34">      .<span style="color:#262c34">subscribe</span>((<span style="color:#262c34">response</span>) =&gt; {</div>
<div class="t m" style="left:0;width:22px;text-align:right;top:380.58px;font-size:7px;color:#77716c">80</div>
<div class="t m" style="left:36.799999999999955px;top:380.68px;font-size:7.2px;letter-spacing:-0.36px;color:#262c34">        <span style="color:#7a1f78">this</span>.<span style="color:#262c34">isConverting</span> = <span style="color:#262c34">false</span>;</div>
<div class="t m" style="left:0;width:22px;text-align:right;top:389.24px;font-size:7px;color:#cdc8c3">81</div>
<div class="t m" style="left:0;width:22px;text-align:right;top:397.90px;font-size:7px;color:#77716c">82</div>
<div class="t m" style="left:36.799999999999955px;top:398.00px;font-size:7.2px;letter-spacing:-0.36px;color:#262c34">        <span style="color:#7a1f78">const</span> <span style="color:#24348a">date</span> = <span style="color:#7a1f78">new</span> <span style="color:#24504a">Date</span>();</div>
<div class="t m" style="left:0;width:22px;text-align:right;top:406.56px;font-size:7px;color:#77716c">83</div>
<div class="t m" style="left:36.799999999999955px;top:406.66px;font-size:7.2px;letter-spacing:-0.36px;color:#262c34">        <span style="color:#262c34">date</span>.<span style="color:#262c34">setTime</span>(<span style="color:#262c34">response</span>.<span style="color:#262c34">toTimestamp</span> * <span style="color:#1c2fcf">1000</span>);</div>
<div class="t m" style="left:0;width:22px;text-align:right;top:415.22px;font-size:7px;color:#77716c">84</div>
<div class="t m" style="left:36.799999999999955px;top:415.32px;font-size:7.2px;letter-spacing:-0.36px;color:#262c34">        <span style="color:#7a1f78">this</span>.<span style="color:#262c34">convertedDate</span> = <span style="color:#7a1f78">this</span>.<span style="color:#262c34">formatDate</span>(<span style="color:#262c34">date</span>);</div>
<div class="t m" style="left:0;width:22px;text-align:right;top:423.88px;font-size:7px;color:#cdc8c3">85</div>
<div class="t m" style="left:0;width:22px;text-align:right;top:432.54px;font-size:7px;color:#77716c">86</div>
<div class="t m" style="left:36.799999999999955px;top:432.64px;font-size:7.2px;letter-spacing:-0.36px;color:#262c34">        <span style="color:#262c34">console</span>.<span style="color:#262c34">timeEnd</span>(<span style="color:#9e2c1c">&#x27;Converting&#x27;</span>);</div>
<div class="t m" style="left:0;width:22px;text-align:right;top:441.20px;font-size:7px;color:#77716c">87</div>
<div class="t m" style="left:36.799999999999955px;top:441.30px;font-size:7.2px;letter-spacing:-0.36px;color:#262c34">      });</div>
<div class="t m" style="left:0;width:22px;text-align:right;top:449.86px;font-size:7px;color:#77716c">88</div>
<div class="t m" style="left:36.799999999999955px;top:449.96px;font-size:7.2px;letter-spacing:-0.36px;color:#262c34">  }</div>
<div class="t m" style="left:0;width:22px;text-align:right;top:458.52px;font-size:7px;color:#cdc8c3">89</div>
<div class="t m" style="left:36.799999999999955px;top:458.62px;font-size:7.2px;letter-spacing:-0.36px;color:#262c34">}</div>
<div class="t m" style="left:0;width:22px;text-align:right;top:467.18px;font-size:7px;color:#cdc8c3">90</div>
</div>
<div class="a" style="left:652.44px;top:109.36px;width:27.72px;height:8.4px;background:rgba(115,120,140,0.17)"></div>
<div class="a" style="left:624.72px;top:308.54px;width:27.72px;height:8.4px;background:rgba(115,120,140,0.17)"></div>
<div class="a" style="left:652.44px;top:447.10px;width:27.72px;height:8.4px;background:rgba(115,120,140,0.17)"></div>
<div class="a" style="left:644.52px;top:455.76px;width:27.72px;height:8.4px;background:rgba(115,120,140,0.17)"></div>
<div class="a" style="left:668.28px;top:507.72px;width:27.72px;height:8.4px;background:rgba(115,120,140,0.17)"></div>
<div class="a" style="left:612px;top:94px;width:1px;height:478px;background:#e4e0e6"></div>
<div class="a" style="left:939px;top:94px;width:9.5px;height:478px;background:#ede9e4"></div>
<div class="a" style="left:939.5px;top:215px;width:7.5px;height:177px;background:#c9c2bc"></div>
<svg style="left:941px;top:97px" width="6" height="4" viewBox="0 0 6 4"><path d="M0 4L3 0.5 6 4z" fill="#333"/></svg>
<svg style="left:941px;top:564px" width="6" height="4" viewBox="0 0 6 4"><path d="M0 0L3 3.5 6 0z" fill="#333"/></svg>
<div class="a" style="left:580px;top:572px;width:368.5px;height:16px;background:#f6f2ee;border-top:1px solid #e3dfdb"></div>
<svg style="left:0;top:0" width="1" height="1"><text x="584.3" y="583.19" font-family="Liberation Sans" font-size="7.2" fill="#3a3632" textLength="65.40000000000009" lengthAdjust="spacingAndGlyphs" >7 characters selected</text></svg>
<svg style="left:0;top:0" width="1" height="1"><text x="850" y="583.2" font-family="Liberation Sans" font-size="7.2" fill="#3a3632" textLength="91" lengthAdjust="spacingAndGlyphs">(From <tspan text-decoration="underline">main.js</tspan>) Coverage: n/a</text></svg>
<div class="a" style="left:949px;top:93.60px;width:176px;height:13.4px;background:#f0ece7;border-bottom:1px solid #e6e2dd"></div>
<svg style="left:955px;top:97.80px" width="4" height="5" viewBox="0 0 4 5"><path d="M0 0v5l3.6-2.5z" fill="#222"/></svg>
<div class="t" style="left:961.5px;top:97.80px;font-size:7.1px;color:#2b2723">Watch</div>
<div class="a" style="left:949px;top:106.80px;width:176px;height:13.4px;background:#f0ece7;border-bottom:1px solid #e6e2dd"></div>
<svg style="left:953.5px;top:111.70px" width="5" height="4" viewBox="0 0 5 4"><path d="M0 0h5L2.5 3.6z" fill="#222"/></svg>
<div class="t" style="left:961.5px;top:111.00px;font-size:7.1px;color:#2b2723">Breakpoints</div>
<div class="a" style="left:952px;top:123.60px;width:7.2px;height:7.2px;border:1px solid #6e6a66;border-radius:1.5px"></div>
<div class="t" style="left:963.5px;top:124.70px;font-size:7.1px;color:#2b2723">Pause on uncaught exceptions</div>
<div class="a" style="left:952px;top:134.20px;width:7.2px;height:7.2px;border:1px solid #6e6a66;border-radius:1.5px"></div>
<div class="t" style="left:963.5px;top:135.30px;font-size:7.1px;color:#2b2723">Pause on caught exceptions</div>
<div class="a" style="left:949px;top:145px;width:176px;height:1px;background:#e3dfda"></div>
<svg style="left:953px;top:149.5px" width="5" height="4" viewBox="0 0 5 4"><path d="M0 0h5L2.5 3.6z" fill="#222"/></svg>
<svg style="left:959.5px;top:147px" width="8" height="9" viewBox="0 0 8 9"><rect x="0.6" y="0.6" width="6.8" height="7.8" rx="1" fill="none" stroke="#e0782a" stroke-width="1.1"/><path d="M2.2 4.5h1M4.8 4.5h1" stroke="#e0782a" stroke-width="1"/></svg>
<svg style="left:0;top:0" width="1" height="1"><text x="972.2" y="154" font-family="Liberation Sans" font-weight="bold" font-size="7.3" fill="#2b2723" textLength="58.6" lengthAdjust="spacingAndGlyphs">app.component.ts</text></svg>
<div class="a" style="left:960px;top:158.8px;width:7.5px;height:7.5px;background:#1b5fd0;border-radius:1.5px"></div>
<svg style="left:960px;top:158.8px" width="8" height="8" viewBox="0 0 8 8"><path d="M1.6 4l1.6 1.7 3.2-3.6" fill="none" stroke="#fff" stroke-width="1.1"/></svg>
<div class="t m" style="left:972px;top:160.2px;font-size:7.2px;letter-spacing:-0.36px;color:#3a4048"><span style="color:#7a1f78">const</span> <span style="color:#24348a">localTime</span> = <span style="color:#7a1f78">new</span> <span style="color:#24504a">Date</span>(`${th…</div>
<div class="t m" style="left:1113px;top:160.2px;font-size:7.2px;letter-spacing:-0.36px;color:#2b2723">62</div>
<div class="a" style="left:949px;top:168.70px;width:176px;height:13.4px;background:#f0ece7;border-bottom:1px solid #e6e2dd"></div>
<svg style="left:953.5px;top:173.60px" width="5" height="4" viewBox="0 0 5 4"><path d="M0 0h5L2.5 3.6z" fill="#222"/></svg>
<div class="t" style="left:961.5px;top:172.90px;font-size:7.1px;color:#2b2723">Scope</div>
<div class="t" style="left:1019px;top:187.9px;font-size:7.1px;color:#6f6a65;font-style:italic">Not paused</div>
<div class="a" style="left:949px;top:197.5px;width:176px;height:1px;background:#e3dfda"></div>
<div class="a" style="left:949px;top:197.90px;width:176px;height:13.4px;background:#f0ece7;border-bottom:1px solid #e6e2dd"></div>
<svg style="left:953.5px;top:202.80px" width="5" height="4" viewBox="0 0 5 4"><path d="M0 0h5L2.5 3.6z" fill="#222"/></svg>
<div class="t" style="left:961.5px;top:202.10px;font-size:7.1px;color:#2b2723">Call Stack</div>
<div class="t" style="left:1019px;top:217.3px;font-size:7.1px;color:#6f6a65;font-style:italic">Not paused</div>
<div class="a" style="left:949px;top:227.5px;width:176px;height:1px;background:#e3dfda"></div>
<div class="a" style="left:949px;top:228.10px;width:176px;height:13.4px;background:#f0ece7;border-bottom:1px solid #e6e2dd"></div>
<svg style="left:955px;top:232.30px" width="4" height="5" viewBox="0 0 4 5"><path d="M0 0v5l3.6-2.5z" fill="#222"/></svg>
<div class="t" style="left:961.5px;top:232.30px;font-size:7.1px;color:#2b2723">XHR/fetch Breakpoints</div>
<div class="a" style="left:949px;top:241.50px;width:176px;height:13.4px;background:#f0ece7;border-bottom:1px solid #e6e2dd"></div>
<svg style="left:953.5px;top:246.40px" width="5" height="4" viewBox="0 0 5 4"><path d="M0 0h5L2.5 3.6z" fill="#222"/></svg>
<div class="t" style="left:961.5px;top:245.70px;font-size:7.1px;color:#2b2723">DOM Breakpoints</div>
<div class="t" style="left:1014px;top:260.5px;font-size:7.1px;color:#6f6a65;font-style:italic">No breakpoints</div>
<div class="a" style="left:949px;top:270.5px;width:176px;height:1px;background:#e3dfda"></div>
<div class="a" style="left:949px;top:270.90px;width:176px;height:13.4px;background:#f0ece7;border-bottom:1px solid #e6e2dd"></div>
<svg style="left:955px;top:275.10px" width="4" height="5" viewBox="0 0 4 5"><path d="M0 0v5l3.6-2.5z" fill="#222"/></svg>
<div class="t" style="left:961.5px;top:275.10px;font-size:7.1px;color:#2b2723">Global Listeners</div>
<div class="a" style="left:949px;top:284.30px;width:176px;height:13.4px;background:#f0ece7;border-bottom:1px solid #e6e2dd"></div>
<svg style="left:955px;top:288.50px" width="4" height="5" viewBox="0 0 4 5"><path d="M0 0v5l3.6-2.5z" fill="#222"/></svg>
<div class="t" style="left:961.5px;top:288.50px;font-size:7.1px;color:#2b2723">Event Listener Breakpoints</div>
<div class="a" style="left:949px;top:297.70px;width:176px;height:13.4px;background:#f0ece7;border-bottom:1px solid #e6e2dd"></div>
<svg style="left:955px;top:301.90px" width="4" height="5" viewBox="0 0 4 5"><path d="M0 0v5l3.6-2.5z" fill="#222"/></svg>
<div class="t" style="left:961.5px;top:301.90px;font-size:7.1px;color:#2b2723">CSP Violation Breakpoints</div>
<div class="a" style="left:74px;top:39px;width:1px;height:550px;background:#fbf8f4"></div>
<div class="a" style="left:74px;top:39px;width:1051px;height:1px;background:#f8f5f1"></div>
<div class="a" style="left:74px;top:587.5px;width:291px;height:1.5px;background:#faf7f3"></div>
</div>
</body></html>
